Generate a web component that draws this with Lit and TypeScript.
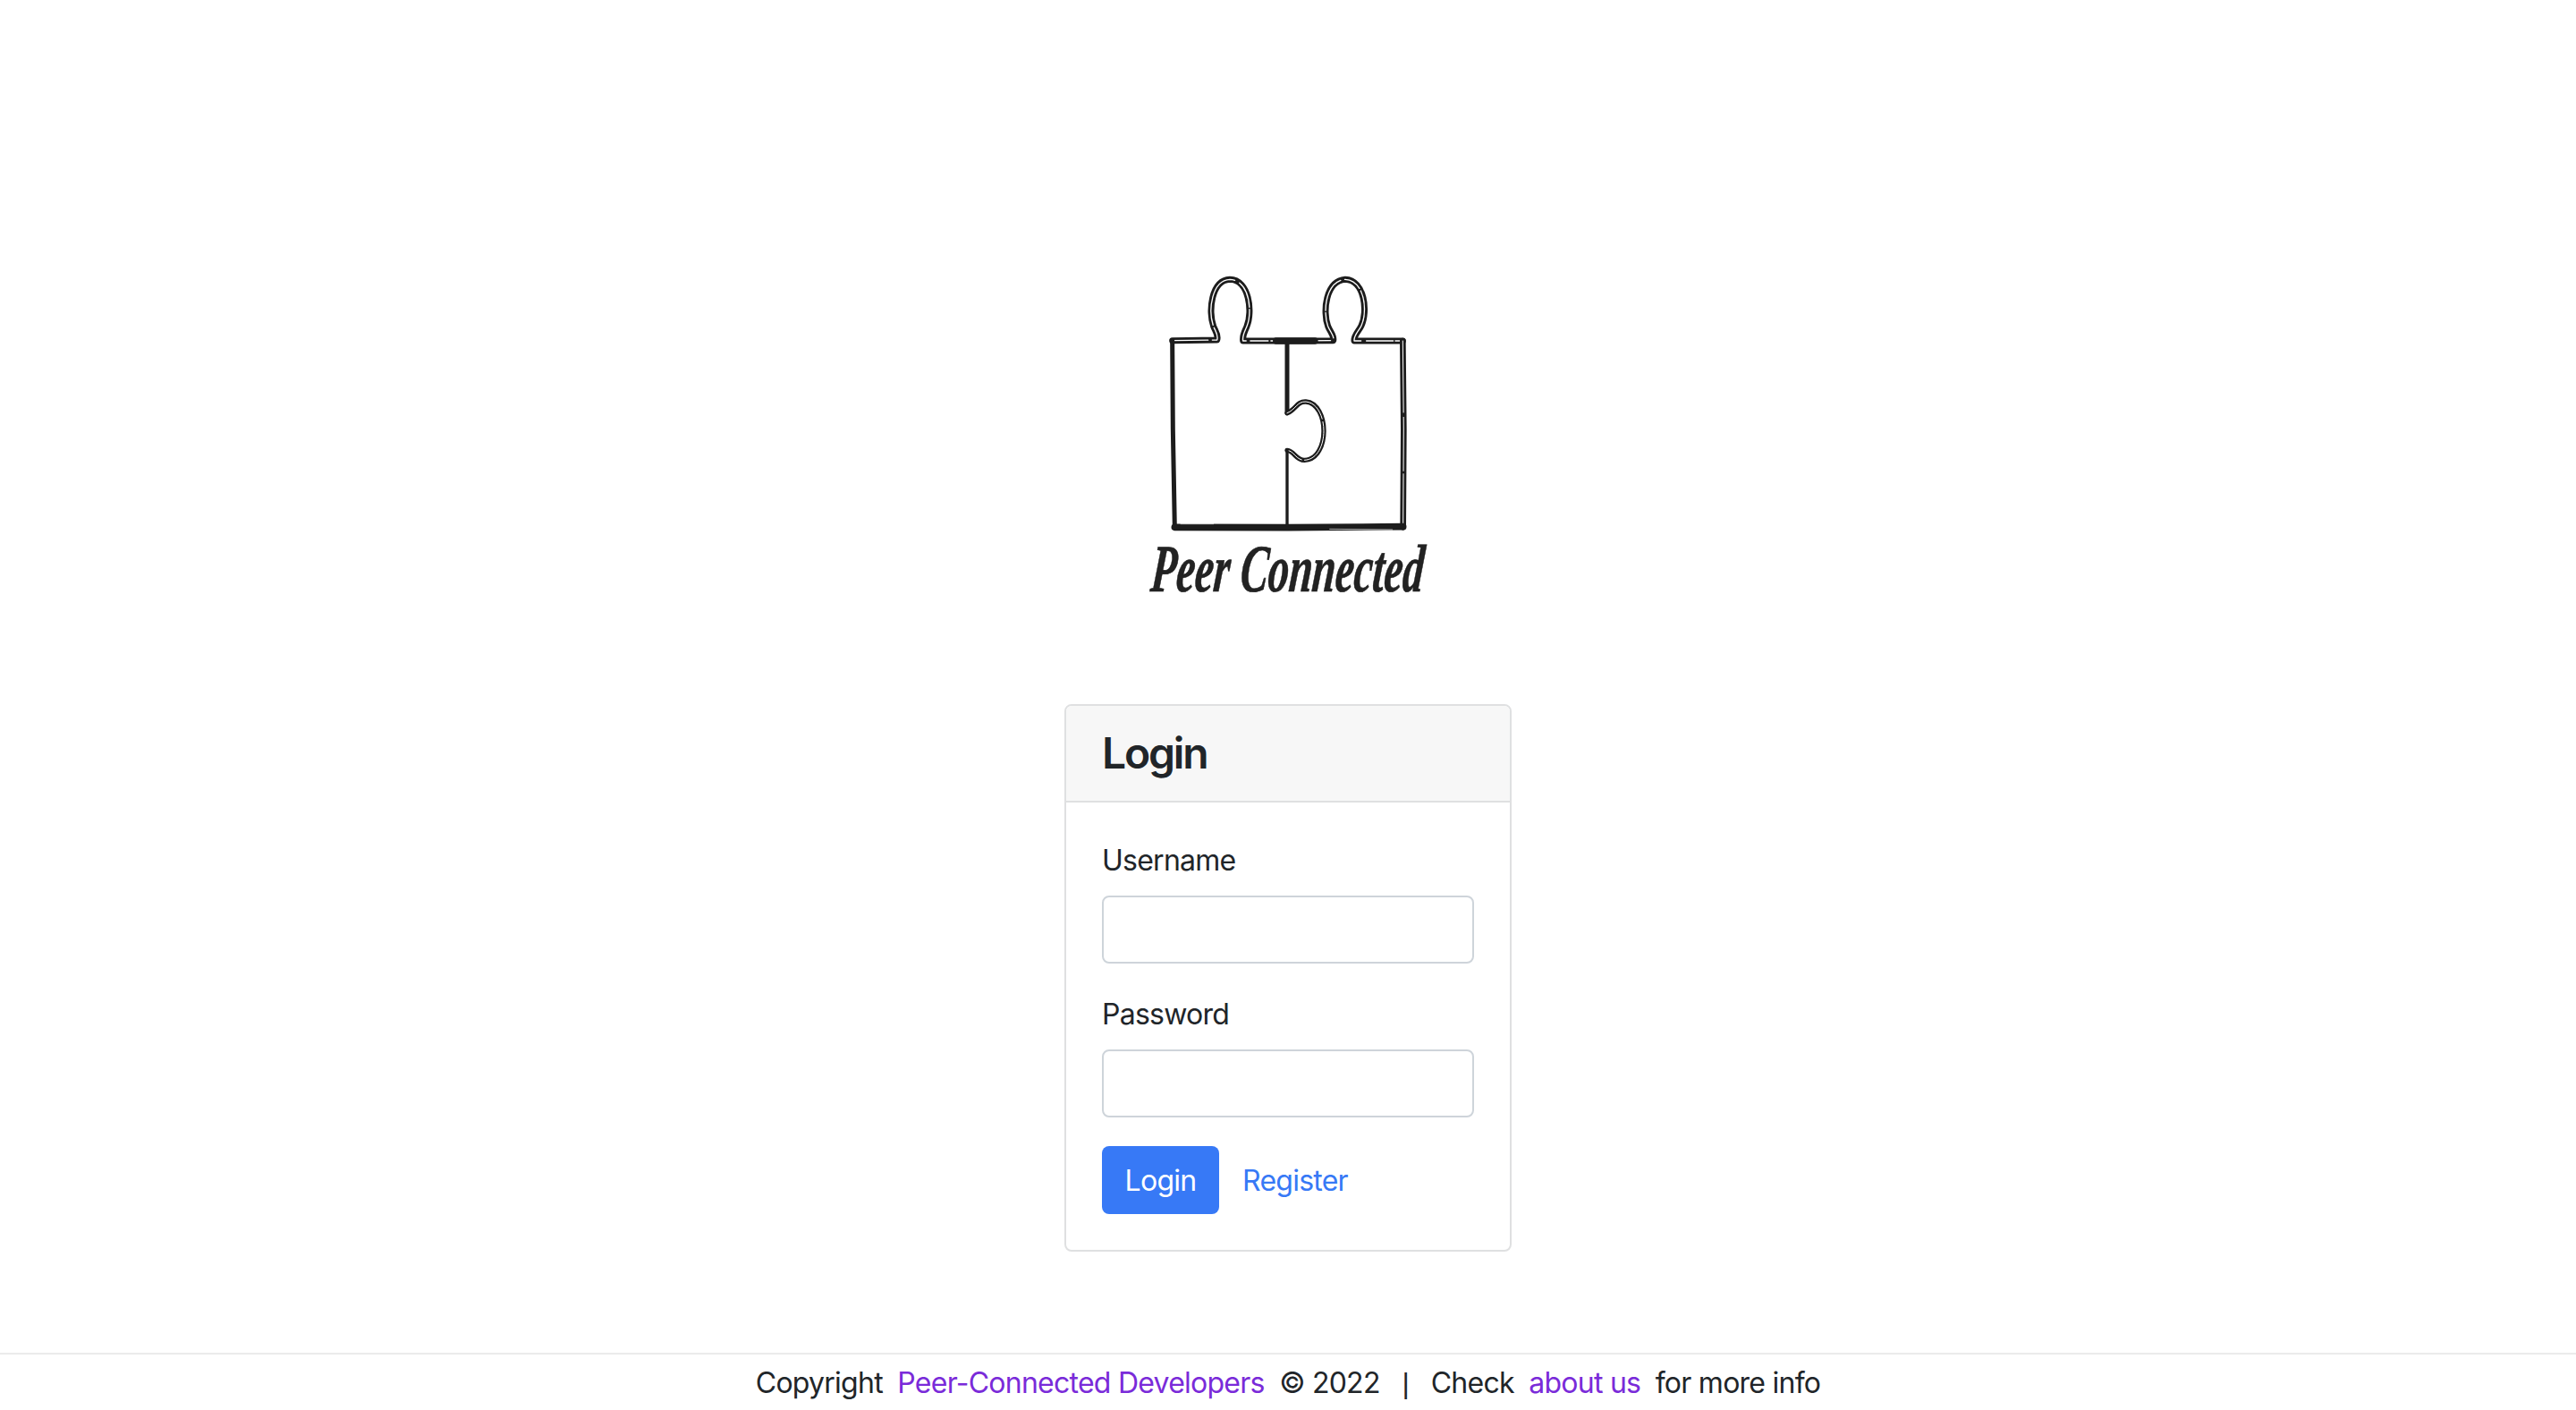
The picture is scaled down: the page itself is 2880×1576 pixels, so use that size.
import { LitElement, html, css, svg } from "lit";
import { customElement } from "lit/decorators.js";

const outlineTop =
  "M212 302 L362 300 C368 284 356 270 350 254 C332 205 342 100 405 97 C470 98 482 205 462 254 C456 270 446 284 449 303 L595 303 L752 302 C756 286 742 274 734 254 C716 205 726 102 792 97 C858 100 868 205 846 252 C838 270 820 284 822 303 L985 303";
const rightSide = "M985 303 L988 600 L986 928";
const leftSide = "M212 302 L214 600 L220 928";
const bottom = "M220 928 L600 929 L986 926";
const centerUpper = "M597 303 L597 545";
const knob =
  "M597 545 C625 535 630 505 660 507 C700 510 720 560 720 605 C720 650 700 702 655 703 C625 703 622 672 597 670";
const centerLower = "M597 670 L597 922";

@customElement("app-root")
export class AppRoot extends LitElement {
  static styles = css`
    :host {
      display: block;
      background: #fff;
      color: #212529;
      font-family: Inter, "Liberation Sans", sans-serif;
      font-size: 32px;
      line-height: 48px;
      letter-spacing: -0.75px;
    }
    .page {
      display: flex;
      flex-direction: column;
      align-items: center;
      padding-top: 280px;
    }
    .logo {
      display: block;
      width: 400px;
      height: 400px;
    }
    .logo-text {
      font-family: "Liberation Serif", serif;
      font-style: italic;
      font-weight: 700;
      font-size: 226px;
      letter-spacing: 0;
      fill: #222;
      stroke: #222;
      stroke-width: 2px;
    }
    .card {
      box-sizing: border-box;
      width: 500px;
      margin-top: 107px;
      border: 2px solid #dfe0e1;
      border-radius: 8px;
      overflow: hidden;
      background: #fff;
    }
    .card-header {
      background: #f7f7f7;
      border-bottom: 2px solid #dfe0e1;
      padding: 24px 40px;
    }
    .card-header h4 {
      margin: 0;
      font-size: 48px;
      line-height: 58px;
      font-weight: 600;
      letter-spacing: -2.2px;
    }
    .card-body {
      padding: 40px;
    }
    .field {
      display: flex;
      flex-direction: column;
      gap: 14px;
      margin-bottom: 32px;
    }
    label {
      display: block;
      line-height: 50px;
    }
    input {
      box-sizing: border-box;
      width: 100%;
      height: 76px;
      border: 2px solid #ced4da;
      border-radius: 8px;
      background: #fff;
      padding: 12px 24px;
      font: inherit;
      outline: none;
    }
    .actions {
      display: flex;
      align-items: center;
      gap: 26px;
    }
    button {
      height: 76px;
      width: 131px;
      border: none;
      border-radius: 8px;
      background: #3779f6;
      color: #fff;
      font: inherit;
      letter-spacing: inherit;
      padding: 2px 0 0;
    }
    .register {
      color: #3779f6;
      text-decoration: none;
      padding-top: 2px;
    }
    footer {
      align-self: stretch;
      margin-top: 113px;
      border-top: 2px solid #ebebeb;
      padding: 8px 0 6px;
      text-align: center;
      white-space: pre;
    }
    footer a {
      color: #7a2bd9;
      text-decoration: none;
    }
    .pipe {
      font-family: "Liberation Sans", sans-serif;
    }
  `;

  private logo() {
    return html`<svg class="logo" viewBox="0 0 1200 1200" role="img" aria-label="Peer Connected">
      <g fill="none" stroke-linecap="round" stroke-linejoin="round">
        ${svg`
          <path d=${outlineTop} stroke="#1c1c1c" stroke-width="21"/>
          <path d=${outlineTop} stroke="#fff" stroke-width="4" stroke-dasharray="120 14 60 9 200 18 90 7" />
          <path d="M560 303 L690 303" stroke="#1c1c1c" stroke-width="22"/>
          <path d=${rightSide} stroke="#1c1c1c" stroke-width="20"/>
          <path d=${rightSide} stroke="#fff" stroke-width="3" stroke-dasharray="240 16 180 10"/>
          <path d=${leftSide} stroke="#1c1c1c" stroke-width="15"/>
          <path d=${bottom} stroke="#1c1c1c" stroke-width="23"/>
          <path d="M240 917 L350 917 M740 934 L950 936" stroke="#fff" stroke-width="2"/>
          <path d=${centerUpper} stroke="#1c1c1c" stroke-width="15"/>
          <path d=${knob} stroke="#1c1c1c" stroke-width="16"/>
          <path d=${knob} stroke="#fff" stroke-width="3" stroke-dasharray="160 10"/>
          <path d=${centerLower} stroke="#1c1c1c" stroke-width="10"/>
        `}
      </g>
      <text class="logo-text" transform="translate(136 1143) skewX(-5) scale(0.62 1)">Peer Connected</text>
    </svg>`;
  }

  render() {
    return html`<div class="page">
      ${this.logo()}
      <section class="card">
        <div class="card-header"><h4>Login</h4></div>
        <form class="card-body">
          <div class="field">
            <label for="u">Username</label>
            <input id="u" type="text" />
          </div>
          <div class="field">
            <label for="p">Password</label>
            <input id="p" type="password" />
          </div>
          <div class="actions">
            <button type="button">Login</button>
            <a class="register" href="#">Register</a>
          </div>
        </form>
      </section>
      <footer>Copyright  <a href="#">Peer-Connected Developers</a>  © 2022   <span class="pipe">|</span>   Check  <a href="#">about us</a>  for more info</footer>
    </div>`;
  }
}
